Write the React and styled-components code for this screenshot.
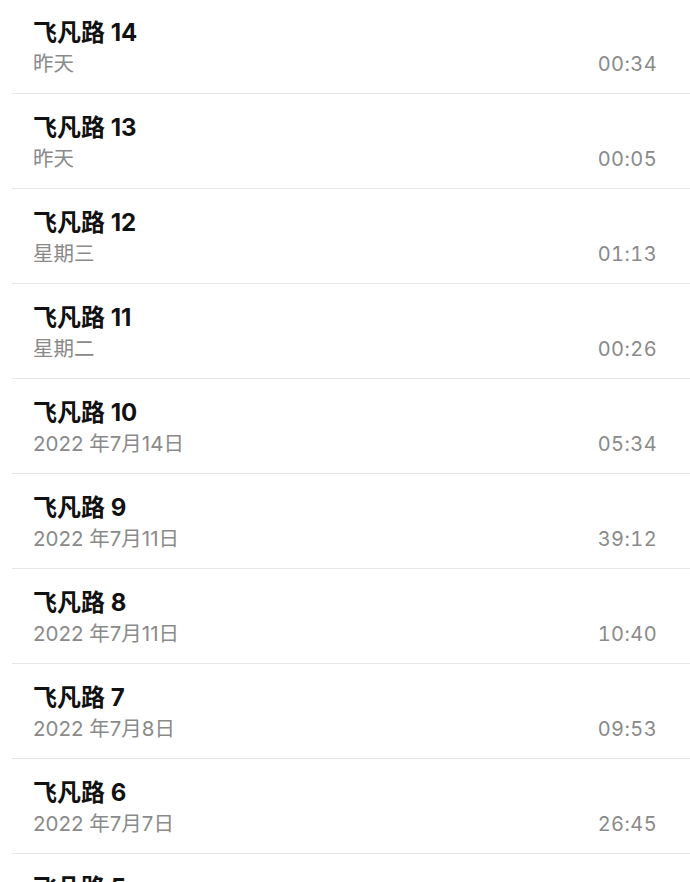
import React from "react";
import styled, { createGlobalStyle } from "styled-components";

const GlobalStyle = createGlobalStyle`
  html, body { margin: 0; padding: 0; background: #ffffff; }
  body {
    font-family: Inter, "Noto Sans CJK SC", sans-serif;
    -webkit-font-smoothing: antialiased;
    overflow: hidden;
  }
`;

const Page = styled.div`
  width: 690px;
  height: 882px;
  overflow: hidden;
  background: #ffffff;
`;

const List = styled.ul`
  list-style: none;
  margin: -1px 0 0 12px;
  padding: 0;
`;

const Row = styled.li`
  padding: 20px 33px 16px 21px;
  border-bottom: 1px solid #e6e6e6;
`;

const Title = styled.div`
  font-size: 24px;
  line-height: 28px;
  font-weight: 700;
  color: #111111;
  white-space: nowrap;
`;

const Meta = styled.div`
  display: flex;
  justify-content: space-between;
  align-items: baseline;
  margin-top: 4px;
  height: 26px;
  line-height: 26px;
  color: #8a8a8a;
`;

const DateText = styled.span`
  font-size: 20.5px;
`;

const Duration = styled.span`
  font-size: 20px;
  letter-spacing: 0.4px;
  font-variant-numeric: tabular-nums;
`;

const memos = [
  { title: "飞凡路 14", date: "昨天", time: "00:34" },
  { title: "飞凡路 13", date: "昨天", time: "00:05" },
  { title: "飞凡路 12", date: "星期三", time: "01:13" },
  { title: "飞凡路 11", date: "星期二", time: "00:26" },
  { title: "飞凡路 10", date: "2022 年7月14日", time: "05:34" },
  { title: "飞凡路 9", date: "2022 年7月11日", time: "39:12" },
  { title: "飞凡路 8", date: "2022 年7月11日", time: "10:40" },
  { title: "飞凡路 7", date: "2022 年7月8日", time: "09:53" },
  { title: "飞凡路 6", date: "2022 年7月7日", time: "26:45" },
  { title: "飞凡路 5", date: "2022 年7月6日", time: "03:21" },
];

export default function App() {
  return (
    <Page>
      <GlobalStyle />
      <List>
        {memos.map((m) => (
          <Row key={m.title}>
            <Title>{m.title}</Title>
            <Meta>
              <DateText>{m.date}</DateText>
              <Duration>{m.time}</Duration>
            </Meta>
          </Row>
        ))}
      </List>
    </Page>
  );
}
